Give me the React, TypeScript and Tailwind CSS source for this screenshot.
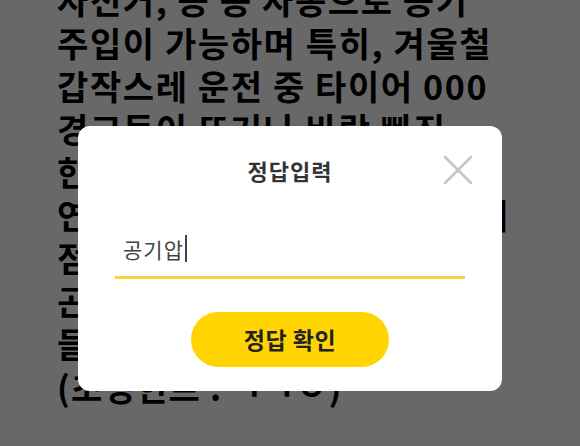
import React from "react";

const lines: { t: string; cls: string }[] = [
  { t: "자전거, 공 등 자동으로 공기", cls: "tracking-[1.6px]" },
  { t: "주입이 가능하며 특히, 겨울철", cls: "tracking-[1.6px]" },
  { t: "갑작스레 운전 중 타이어 000", cls: "tracking-[1.6px]" },
  { t: "경고등이 뜨거나 바람 빠진", cls: "tracking-[1.6px]" },
  { t: "한 타이어를 발견했을 때 유용", cls: "tracking-[1.6px]" },
  { t: "연결만 하면 간편하게 공기를 비", cls: "tracking-[0.9px]" },
  { t: "점검할 수 있어 운전자들에게", cls: "tracking-[1.6px]" },
  { t: "곤란한 상황을 해결해 주어", cls: "tracking-[1.6px]" },
  { t: "들에게 인기가 많습니다.", cls: "tracking-[1.6px]" },
  { t: "(초성힌트 : ㄱㄱㅇ)", cls: "tracking-[1.2px]" },
];

export default function App() {
  return (
    <div
      className="relative w-[580px] h-[446px] overflow-hidden bg-[#686868]"
      style={{ fontFamily: '"Noto Sans CJK KR", "Noto Sans", sans-serif' }}
    >
      <div className="-mt-[22px] pl-[57px] flex flex-col">
        {lines.map((l, i) => (
          <div
            key={i}
            className={`whitespace-nowrap text-[34px] leading-[43px] font-bold text-black ${l.cls}`}
          >
            {l.t}
          </div>
        ))}
      </div>

      <div className="absolute left-[78px] top-[126px] w-[424px] h-[265px] rounded-[12px] bg-white flex flex-col items-center">
        <div className="pt-[30px] text-[22px] leading-[28px] font-bold tracking-[1px] text-[#333333]">
          정답입력
        </div>
        <button className="absolute right-[29px] top-[29px] w-[30px] h-[30px]">
          <svg width="30" height="30" viewBox="0 0 30 30">
            <path
              d="M2 2 L28 28 M28 2 L2 28"
              stroke="#c6c6c6"
              strokeWidth="2.6"
              strokeLinecap="round"
              fill="none"
            />
          </svg>
        </button>
        <div className="mt-[51px] w-[350px] pb-[14px] pl-[8px] border-b-[3px] border-[#f6d43c] flex items-center">
          <span className="text-[21px] leading-[26px] tracking-[1px] text-[#444444]">공기압</span>
          <span className="ml-[1px] w-[2px] h-[27px] bg-[#444444]" />
        </div>
        <button className="mt-[33px] w-[198px] h-[55px] rounded-full bg-[#ffd400] text-[23px] font-bold tracking-[0.5px] text-[#222222]">
          정답 확인
        </button>
      </div>
    </div>
  );
}
